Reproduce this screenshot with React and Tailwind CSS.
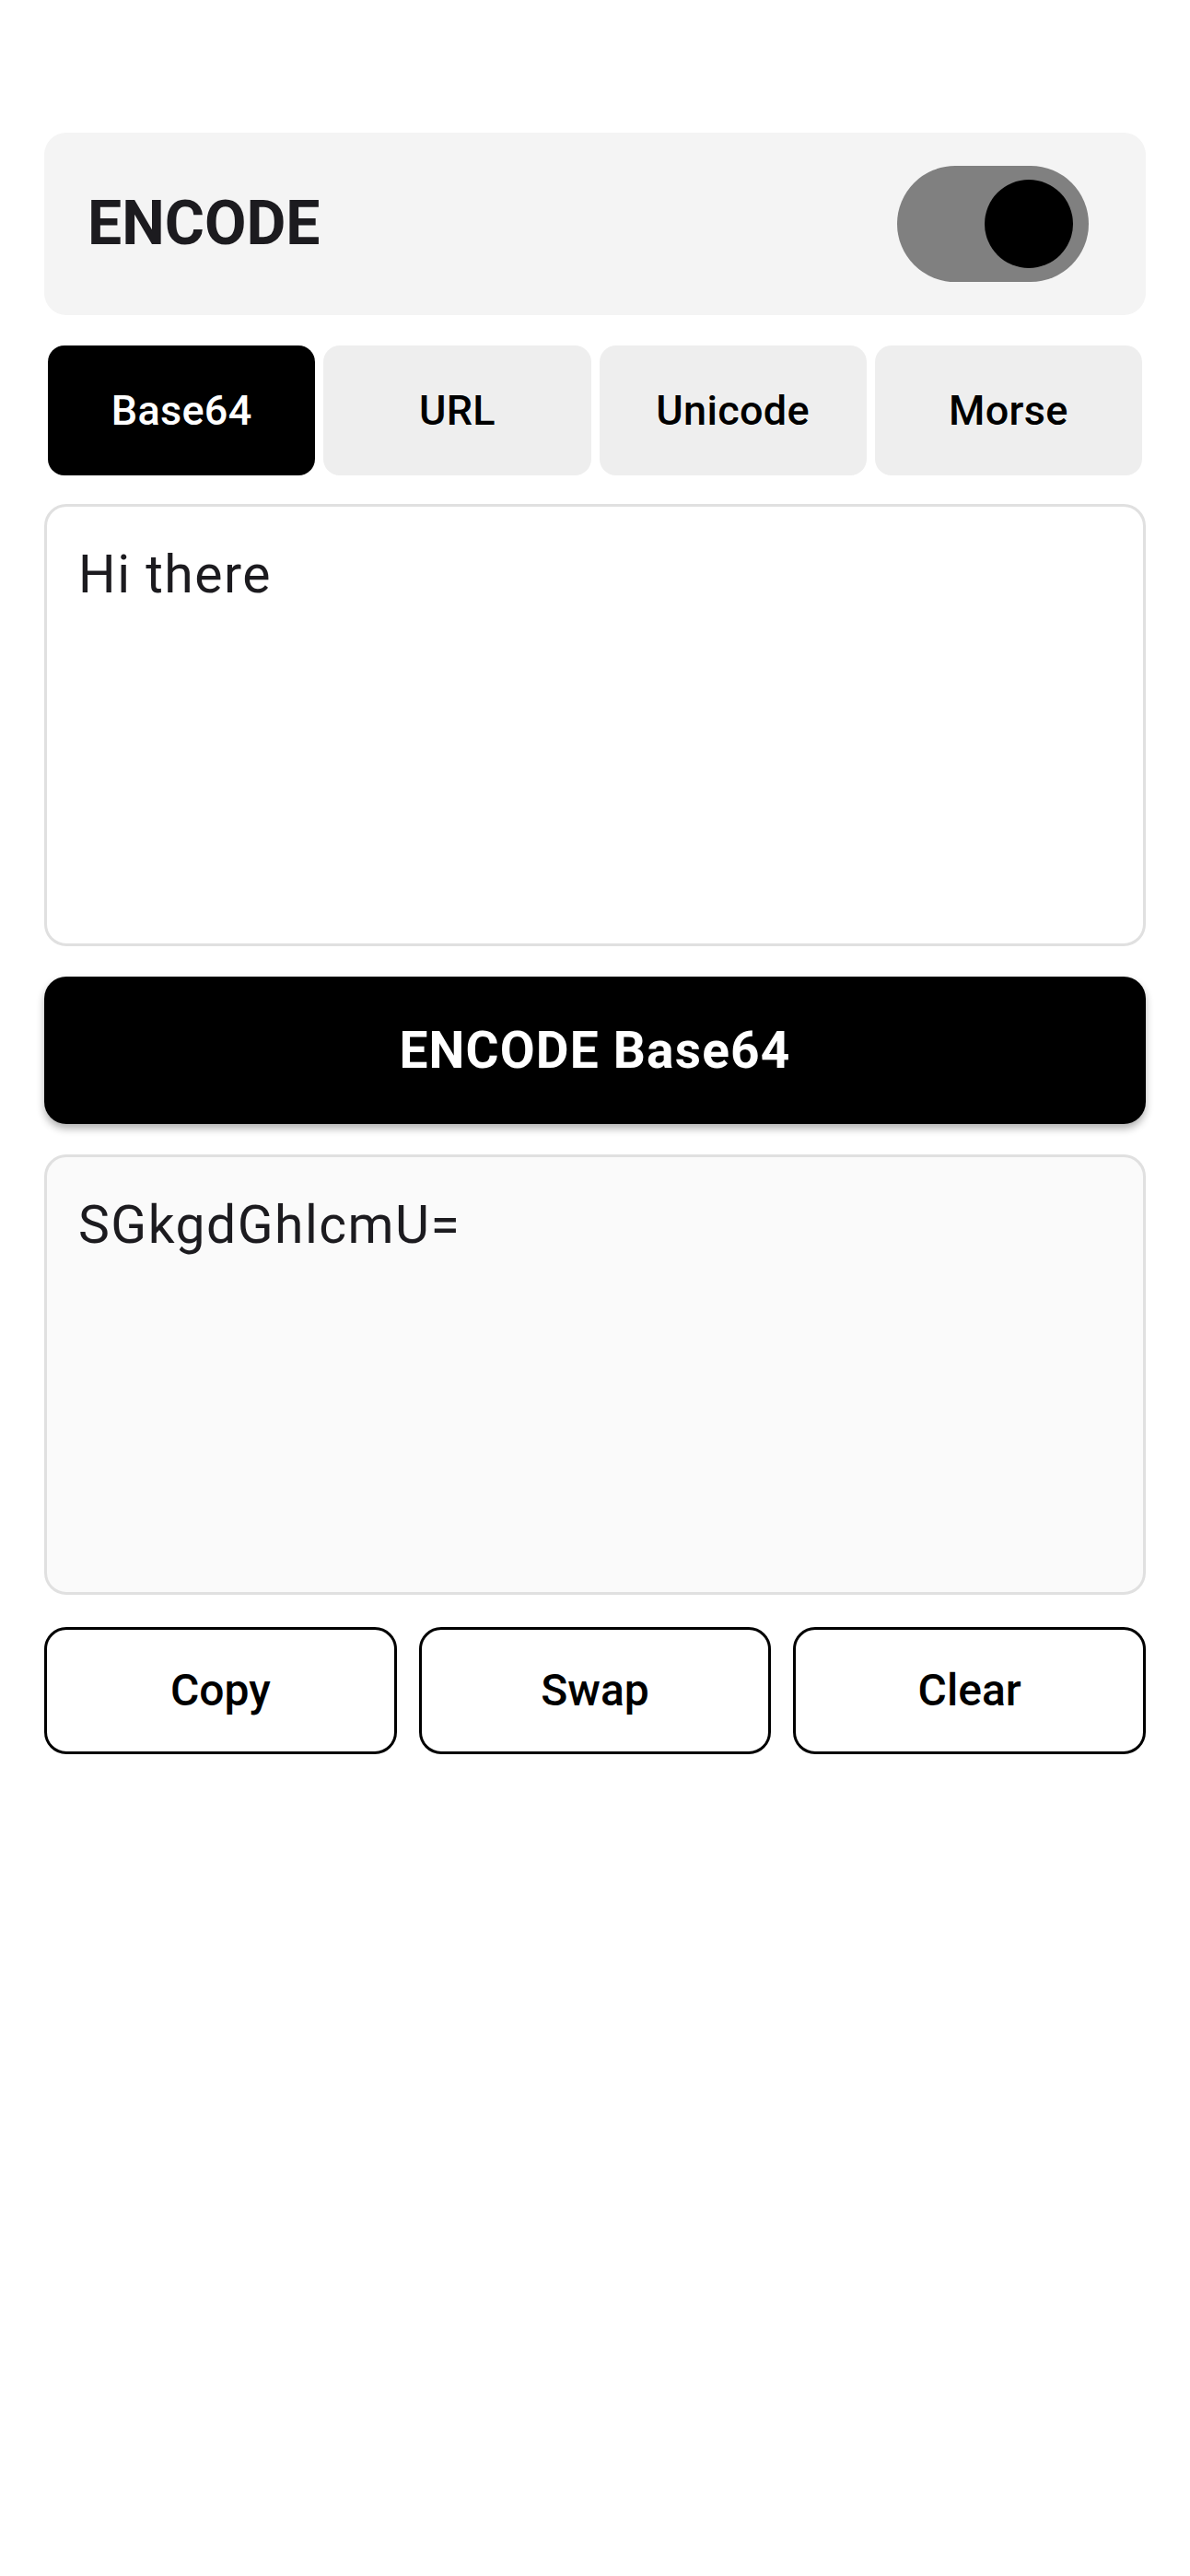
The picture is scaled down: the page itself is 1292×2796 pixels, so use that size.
import React, { useState } from "react";

const tabs = ["Base64", "URL", "Unicode", "Morse"];

export default function App() {
  const [active, setActive] = useState("Base64");
  const [encode, setEncode] = useState(true);
  const [input, setInput] = useState("Hi there");
  const [output] = useState("SGkgdGhlcmU=");

  return (
    <div
      className="min-h-[2796px] w-full bg-white pt-[144px] px-[48px] text-[#1c1b1f]"
      style={{ fontFamily: "Roboto, 'Noto Sans', sans-serif" }}
    >
      {/* Header card */}
      <div className="flex h-[198px] items-center justify-between rounded-[24px] bg-[#f4f4f4] pl-[47px] pr-[62px]">
        <span className="text-[66px] font-bold leading-none text-[#1c1b1f]">
          {encode ? "ENCODE" : "DECODE"}
        </span>
        <button
          onClick={() => setEncode(!encode)}
          className="flex h-[126px] w-[208px] items-center justify-end rounded-full bg-[#808080] pr-[17px]"
        >
          <span className="block h-[96px] w-[96px] rounded-full bg-black" />
        </button>
      </div>

      {/* Tabs */}
      <div className="mt-[33px] flex gap-[9px] px-[4px]">
        {tabs.map((t) => (
          <button
            key={t}
            onClick={() => setActive(t)}
            className={
              "flex h-[141px] flex-1 items-center justify-center rounded-[18px] text-[45px] font-medium tracking-[0.3px] " +
              (active === t ? "bg-black text-white" : "bg-[#eeeeee] text-black")
            }
          >
            {t}
          </button>
        ))}
      </div>

      {/* Input */}
      <textarea
        value={input}
        onChange={(e) => setInput(e.target.value)}
        className="mt-[31px] block h-[480px] w-full resize-none rounded-[24px] border-[3px] border-[#e0e0e0] bg-white pl-[34px] pt-[40px] text-[57px] leading-[1.2] tracking-[1.5px] text-[#1c1b1f] outline-none"
      />

      {/* Encode button */}
      <button className="mt-[33px] flex h-[160px] w-full items-center justify-center rounded-[24px] bg-black text-[55px] font-bold tracking-[1.2px] text-white shadow-[0_5px_8px_rgba(0,0,0,0.3)]">
        {encode ? "ENCODE" : "DECODE"} {active}
      </button>

      {/* Output */}
      <textarea
        readOnly
        value={output}
        className="mt-[33px] block h-[478px] w-full resize-none rounded-[24px] border-[3px] border-[#e0e0e0] bg-[#fafafa] pl-[34px] pt-[40px] text-[57px] leading-[1.2] tracking-[1.5px] text-[#1c1b1f] outline-none"
      />

      {/* Actions */}
      <div className="mt-[35px] grid grid-cols-3 gap-[24px]">
        {["Copy", "Swap", "Clear"].map((b) => (
          <button
            key={b}
            className="flex h-[138px] items-center justify-center rounded-[24px] border-[3.5px] border-black bg-white text-[48px] font-medium text-black"
          >
            {b}
          </button>
        ))}
      </div>
    </div>
  );
}
